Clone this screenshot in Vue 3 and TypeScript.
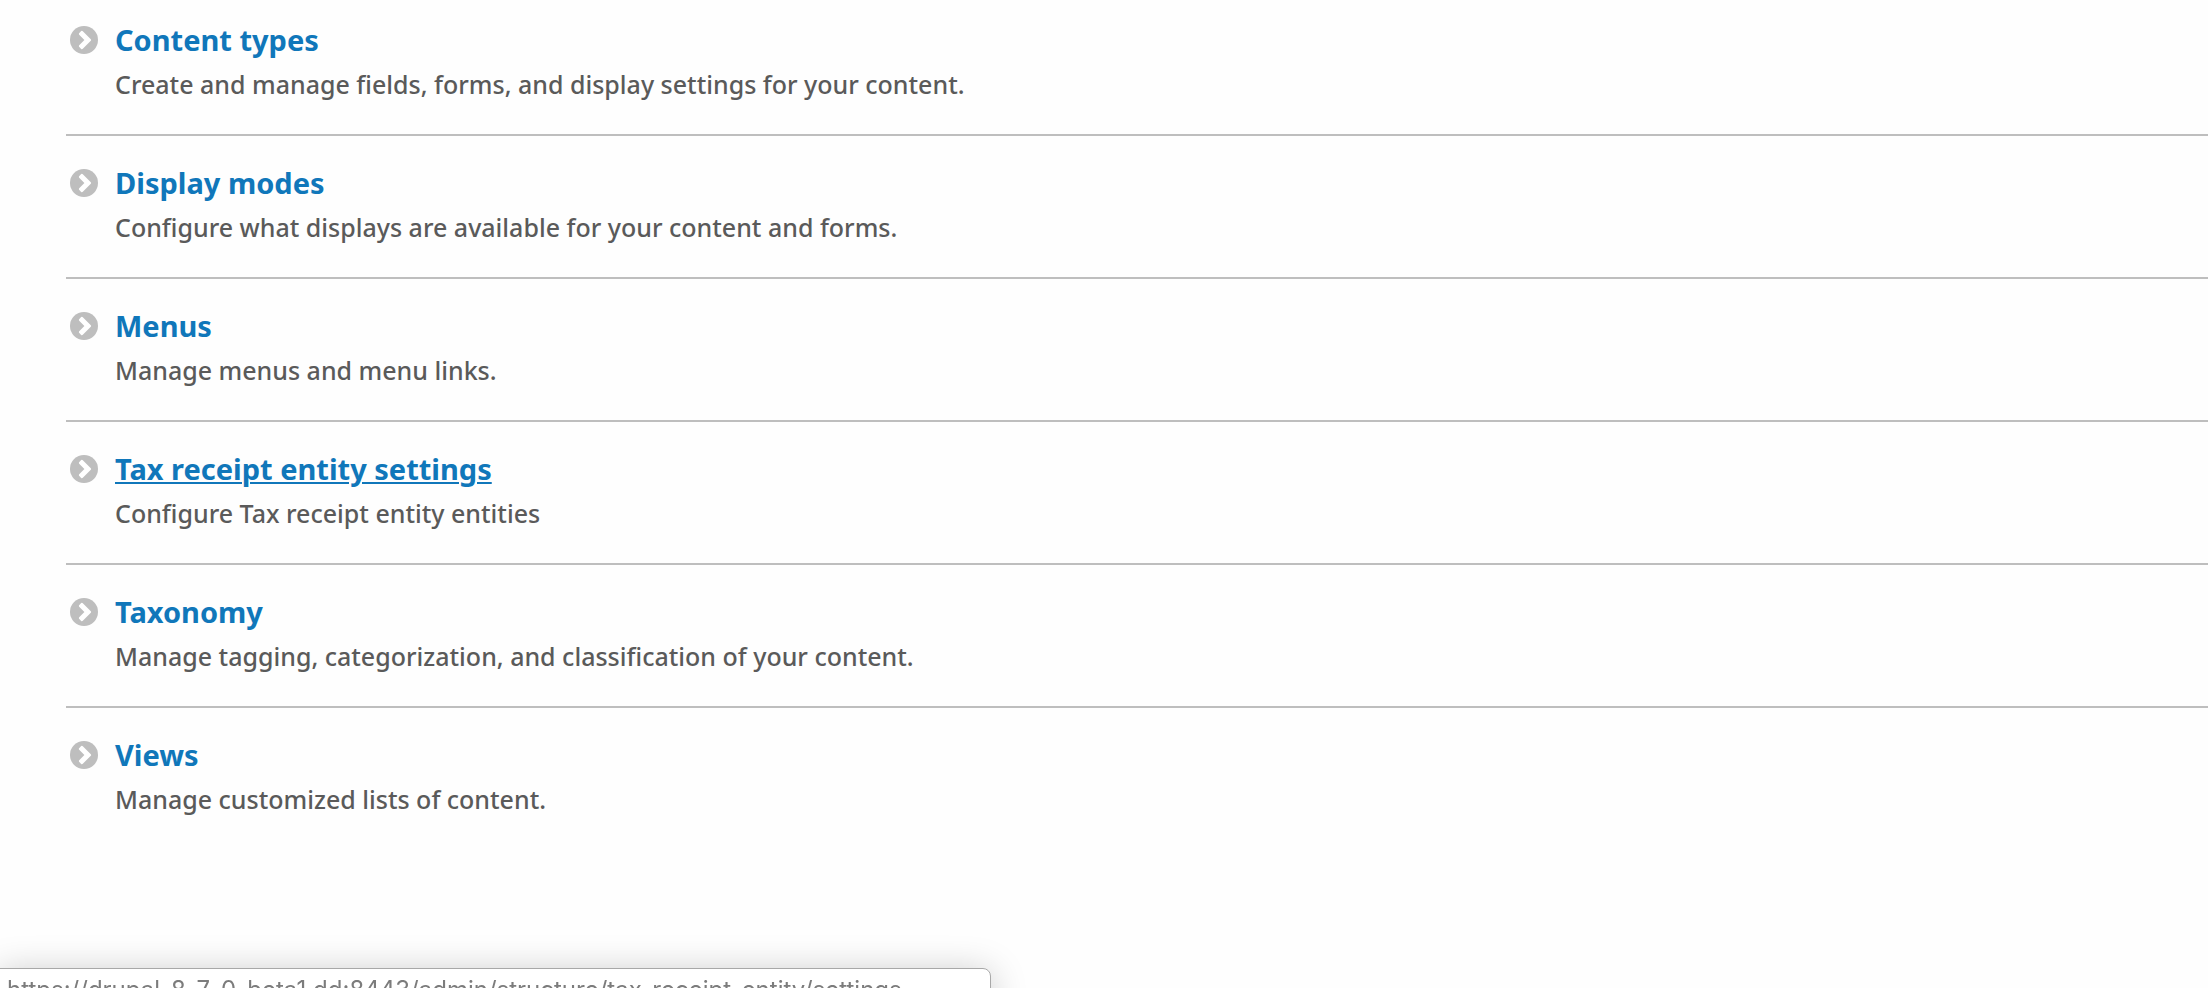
<script setup lang="ts">
import { shallowRef } from 'vue'

interface AdminEntry {
  title: string
  description: string
  path: string
}

const host = 'https://drupal-8-7-0-beta1.dd:8443'

const entries: AdminEntry[] = [
  {
    title: 'Content types',
    description: 'Create and manage fields, forms, and display settings for your content.',
    path: '/admin/structure/types',
  },
  {
    title: 'Display modes',
    description: 'Configure what displays are available for your content and forms.',
    path: '/admin/structure/display-modes',
  },
  {
    title: 'Menus',
    description: 'Manage menus and menu links.',
    path: '/admin/structure/menu',
  },
  {
    title: 'Tax receipt entity settings',
    description: 'Configure Tax receipt entity entities',
    path: '/admin/structure/tax-receipt-entity/settings',
  },
  {
    title: 'Taxonomy',
    description: 'Manage tagging, categorization, and classification of your content.',
    path: '/admin/structure/taxonomy',
  },
  {
    title: 'Views',
    description: 'Manage customized lists of content.',
    path: '/admin/structure/views',
  },
]

const active = shallowRef<AdminEntry>(entries[3])
</script>

<template>
  <main class="page">
    <ul class="admin-list">
      <li v-for="entry in entries" :key="entry.path" class="item">
        <svg class="icon" viewBox="0 0 28 28" aria-hidden="true">
          <circle cx="14" cy="14" r="14" fill="#bebebe" />
          <path
            d="M9.1 7.2 L11.2 5.1 Q12 4.5 12.8 5.2 L20.8 13.2 Q21.5 14 20.8 14.8 L12.8 22.8 Q12 23.5 11.2 22.9 L9.1 20.8 Q8.5 20 9.2 19.2 L14.4 14 L9.2 8.8 Q8.5 8 9.1 7.2 Z"
            fill="#fff"
          />
        </svg>
        <div class="text">
          <a
            class="title"
            :class="{ active: entry === active }"
            :href="entry.path"
            @mouseenter="active = entry"
            @click.prevent
          >{{ entry.title }}</a>
          <p class="description">{{ entry.description }}</p>
        </div>
      </li>
    </ul>
    <div class="status">{{ host + active.path }}</div>
  </main>
</template>

<style>
body {
  background: #fefefe;
}
</style>

<style scoped>
.page {
  padding-left: 66px;
  font-family: "Noto Sans", "Open Sans", sans-serif;
}

.admin-list {
  margin: 0;
  padding: 0;
  list-style: none;
}

.item {
  display: flex;
  align-items: flex-start;
  gap: 17px;
  padding: 29px 0 32px 4px;
  border-top: 2px solid #bebebe;
}

.item:first-child {
  padding-top: 22px;
  border-top: 0;
}

.icon {
  flex: none;
  width: 28px;
  height: 28px;
  margin-top: 4px;
}

.text {
  display: flex;
  flex-direction: column;
  align-items: flex-start;
  gap: 8px;
}

.title {
  color: #1077ba;
  font-size: 29px;
  font-weight: 700;
  line-height: 36px;
  text-decoration: none;
}

.title.active {
  text-decoration: underline;
  text-decoration-thickness: 2px;
  text-underline-offset: 2px;
}

.description {
  margin: 0;
  color: #5a5a5a;
  font-size: 25px;
  font-weight: 500;
  line-height: 36px;
}

.status {
  position: fixed;
  bottom: -24px;
  left: -2px;
  padding: 0 88px 0 8px;
  border: 1px solid #a8a8a8;
  border-radius: 0 8px 0 0;
  background: #fff;
  box-shadow: 0 4px 36px rgba(0, 0, 0, 0.22);
  color: #7c7c7c;
  font-family: Inter, sans-serif;
  font-size: 24px;
  line-height: 42px;
  white-space: nowrap;
}
</style>
